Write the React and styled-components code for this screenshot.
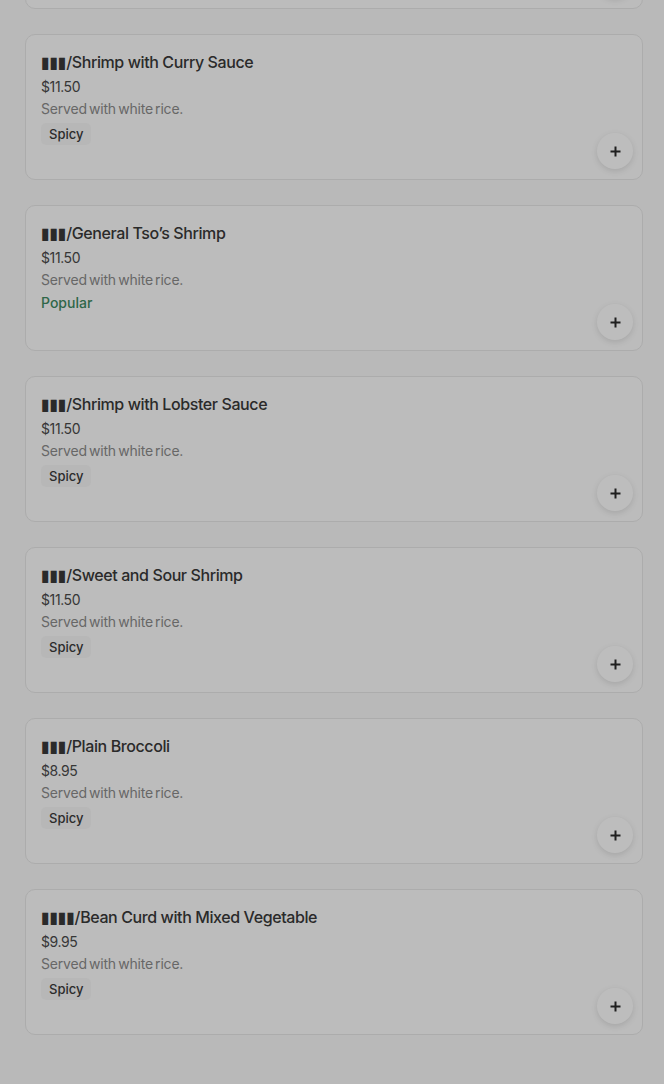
import React from 'react';
import styled, { createGlobalStyle } from 'styled-components';

const GlobalStyle = createGlobalStyle`
  html, body {
    margin: 0;
    padding: 0;
    background: #f7f7f7;
    font-family: Inter, "DejaVu Sans", sans-serif;
    overflow: hidden;
  }
`;

const Page = styled.div`
  min-height: 1084px;
  background: #f7f7f7;
`;

const MenuList = styled.div`
  display: flex;
  flex-direction: column;
  gap: 25px;
  padding: 0 21px 50px 25px;
  margin-top: -137px;
`;

const Card = styled.div`
  box-sizing: border-box;
  min-height: 146px;
  display: grid;
  grid-template-columns: 1fr auto;
  padding: 17px 9px 10px 15px;
  background: #fbfbfb;
  border: 1px solid #e6e6e6;
  border-radius: 10px;
`;

const Info = styled.div`
  display: flex;
  flex-direction: column;
  align-items: flex-start;
`;

const Title = styled.div`
  font-size: 16px;
  line-height: 20px;
  font-weight: 500;
  color: #383838;
  letter-spacing: -0.4px;
`;

const Price = styled.div`
  margin-top: 5px;
  font-size: 14px;
  line-height: 20px;
  color: #4a4a4a;
  letter-spacing: -0.4px;
`;

const Description = styled.div`
  margin-top: 2px;
  font-size: 14px;
  line-height: 20px;
  color: #8a8a8a;
  letter-spacing: -0.2px;
  word-spacing: -1.5px;
`;

const Tag = styled.span`
  margin-top: ${p => (p.$plain ? '3px' : '4px')};
  padding: ${p => (p.$plain ? '0' : '1px 8px')};
  font-size: ${p => (p.$plain ? '14px' : '13px')};
  line-height: 20px;
  font-weight: 500;
  color: ${p => (p.$plain ? '#3f8a62' : '#3a3a3a')};
  background: ${p => (p.$plain ? 'transparent' : '#f5f5f5')};
  border-radius: 5px;
`;

const AddButton = styled.button`
  align-self: end;
  width: 36px;
  height: 36px;
  border: none;
  border-radius: 50%;
  background: #fdfdfd;
  box-shadow: 0 2px 6px rgba(0, 0, 0, 0.12);
  display: flex;
  align-items: center;
  justify-content: center;
  padding: 0;
  cursor: pointer;
`;

const Dim = styled.div`
  position: fixed;
  inset: 0;
  background: rgba(0, 0, 0, 0.25);
  backdrop-filter: blur(0.5px);
`;

const items = [
  { name: '▮▮▮/Shrimp with Garlic Sauce', price: '$11.50', tag: 'Spicy' },
  { name: '▮▮▮/Shrimp with Curry Sauce', price: '$11.50', tag: 'Spicy' },
  { name: '▮▮▮/General Tso’s Shrimp', price: '$11.50', tag: 'Popular', plain: true },
  { name: '▮▮▮/Shrimp with Lobster Sauce', price: '$11.50', tag: 'Spicy' },
  { name: '▮▮▮/Sweet and Sour Shrimp', price: '$11.50', tag: 'Spicy' },
  { name: '▮▮▮/Plain Broccoli', price: '$8.95', tag: 'Spicy' },
  { name: '▮▮▮▮/Bean Curd with Mixed Vegetable', price: '$9.95', tag: 'Spicy' },
];

const Plus = () => (
  <svg width="13" height="13" viewBox="0 0 13 13">
    <path d="M6.5 1.5v10M1.5 6.5h10" stroke="#2a2a2a" strokeWidth="2" />
  </svg>
);

export default function App() {
  return (
    <Page>
      <GlobalStyle />
      <MenuList>
        {items.map((item, i) => (
          <Card key={i}>
            <Info>
              <Title>{item.name}</Title>
              <Price>{item.price}</Price>
              <Description>Served with white rice.</Description>
              <Tag $plain={item.plain}>{item.tag}</Tag>
            </Info>
            <AddButton aria-label="Add">
              <Plus />
            </AddButton>
          </Card>
        ))}
      </MenuList>
      <Dim />
    </Page>
  );
}
